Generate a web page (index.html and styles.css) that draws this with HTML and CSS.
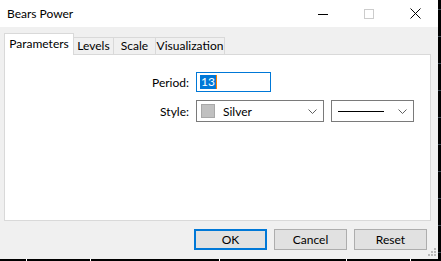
FILE: index.html
```html
<!DOCTYPE html>
<html lang="en">
<head>
  <meta charset="UTF-8">
  <title>Bears Power</title>
  <link rel="stylesheet" href="styles.css">
</head>
<body>
<div class="screen">
  <div class="window">
    <div class="titlebar">
      <span class="title">Bears Power</span>
      <div class="caption">
        <div class="cap-btn"><svg width="10" height="10"><line x1="0" y1="5.5" x2="10" y2="5.5" stroke="#000" stroke-width="1"/></svg></div>
        <div class="cap-btn"><svg width="10" height="10"><rect x="0.5" y="0.5" width="9" height="9" fill="none" stroke="#cccccc"/></svg></div>
        <div class="cap-btn"><svg width="11" height="11"><path d="M0.5 0.5 L10.5 10.5 M10.5 0.5 L0.5 10.5" stroke="#000" stroke-width="1"/></svg></div>
      </div>
    </div>
    <div class="content">
      <div class="tabs">
        <div class="tab active tab-params">Parameters</div>
        <div class="tab tab-levels">Levels</div>
        <div class="tab tab-scale">Scale</div>
        <div class="tab tab-vis">Visualization</div>
      </div>
      <div class="panel">
        <div class="form">
          <label>Period:</label>
          <div class="input"><span class="sel">13</span><span class="caret"></span></div>
          <span></span>
          <label>Style:</label>
          <div class="combo color-combo">
            <span class="swatch"></span><span class="combo-text">Silver</span>
            <svg class="chev" width="9" height="5"><polyline points="0.5,0.5 4.5,4.5 8.5,0.5" fill="none" stroke="#606060"/></svg>
          </div>
          <div class="combo line-combo">
            <span class="line"></span>
            <svg class="chev" width="9" height="5"><polyline points="0.5,0.5 4.5,4.5 8.5,0.5" fill="none" stroke="#606060"/></svg>
          </div>
        </div>
      </div>
      <div class="buttons">
        <button class="btn default">OK</button>
        <button class="btn">Cancel</button>
        <button class="btn">Reset</button>
      </div>
    </div>
    <svg class="grip" width="9" height="9">
      <rect x="7" y="0" width="2" height="2" fill="#b8b8b8"/>
      <rect x="4" y="3" width="2" height="2" fill="#b8b8b8"/>
      <rect x="7" y="3" width="2" height="2" fill="#b8b8b8"/>
      <rect x="1" y="6" width="2" height="2" fill="#b8b8b8"/>
      <rect x="4" y="6" width="2" height="2" fill="#b8b8b8"/>
      <rect x="7" y="6" width="2" height="2" fill="#b8b8b8"/>
    </svg>
  </div>
  <div class="edge-right"></div>
  <div class="edge-bottom"></div>
</div>
</body>
</html>
```

FILE: styles.css
```css
body { margin: 0; background: #000; font-family: "Segoe UI", Lato, "Liberation Sans", sans-serif; font-size: 12px; color: #000; }
.screen { display: grid; grid-template-columns: 438px 3px; grid-template-rows: 259px 2px; width: 441px; height: 261px; background: #000; }
.window { position: relative; background: #f0f0f0; display: flex; flex-direction: column; }
.titlebar { height: 27px; background: #fff; display: flex; align-items: center; }
.title { padding-left: 7px; flex: 1; }
.caption { display: flex; height: 27px; }
.cap-btn { width: 46px; display: flex; align-items: center; justify-content: center; }
.content { padding: 7px 7px 0 4px; display: flex; flex-direction: column; }
.tabs { display: flex; align-items: flex-end; height: 20px; position: relative; z-index: 1; }
.tab { height: 16px; line-height: 16px; box-sizing: content-box; text-align: center; white-space: nowrap; border: 1px solid #d9d9d9; border-bottom: none; border-left: none; background: #f0f0f0; }
.tab.active { height: 21px; line-height: 19px; background: #fff; border-left: 1px solid #d9d9d9; margin-bottom: -1px; }
.tab-params { width: 68px; }
.tab-levels { width: 39px; }
.tab-scale { width: 41px; }
.tab-vis { width: 68px; }
.panel { height: 165px; background: #fff; border: 1px solid #d9d9d9; }
.form { display: grid; grid-template-columns: 184px 128px 83px; grid-template-rows: 20px 22px; column-gap: 7px; row-gap: 8px; padding-top: 17px; align-items: center; }
.form label { text-align: right; }
.input { width: 75px; height: 20px; box-sizing: border-box; border: 1px solid #0078d7; display: flex; align-items: center; padding-left: 3px; }
.sel { background: #0078d7; color: #fff; line-height: 14px; padding: 0 1px; }
.caret { width: 1px; height: 14px; background: #ff7f00; }
.combo { height: 22px; box-sizing: border-box; border: 1px solid #7a7a7a; background: #fff; display: flex; align-items: center; }
.color-combo { padding: 0 6px 0 4px; }
.swatch { width: 12px; height: 12px; background: #c0c0c0; border: 1px solid #a8a8a8; margin-right: 8px; }
.combo-text { flex: 1; }
.line-combo { padding: 0 6px 0 6px; }
.line { flex: 1; height: 1px; background: #000; margin-right: 14px; }
.buttons { display: flex; justify-content: flex-end; gap: 7px; margin-top: 8px; padding-right: 4px; }
.btn { width: 73px; height: 21px; box-sizing: border-box; border: 1px solid #adadad; background: #e1e1e1; font: inherit; padding: 0; }
.btn.default { border: 2px solid #0078d7; }
.grip { position: absolute; right: 2px; bottom: 2px; }
.edge-right { background: #000 repeating-linear-gradient(to bottom, transparent 0 9px, #3a4650 9px 10px, transparent 10px 27px); }
.edge-bottom { grid-column: 1 / 3; background:
  linear-gradient(#fff, #fff) 26px 0 / 1px 2px no-repeat,
  linear-gradient(#fff, #fff) 90px 0 / 1px 2px no-repeat,
  linear-gradient(#fff, #fff) 219px 0 / 1px 2px no-repeat,
  linear-gradient(#fff, #fff) 346px 0 / 1px 2px no-repeat,
  linear-gradient(#fff, #fff) 410px 0 / 1px 2px no-repeat,
  #000; }
```
